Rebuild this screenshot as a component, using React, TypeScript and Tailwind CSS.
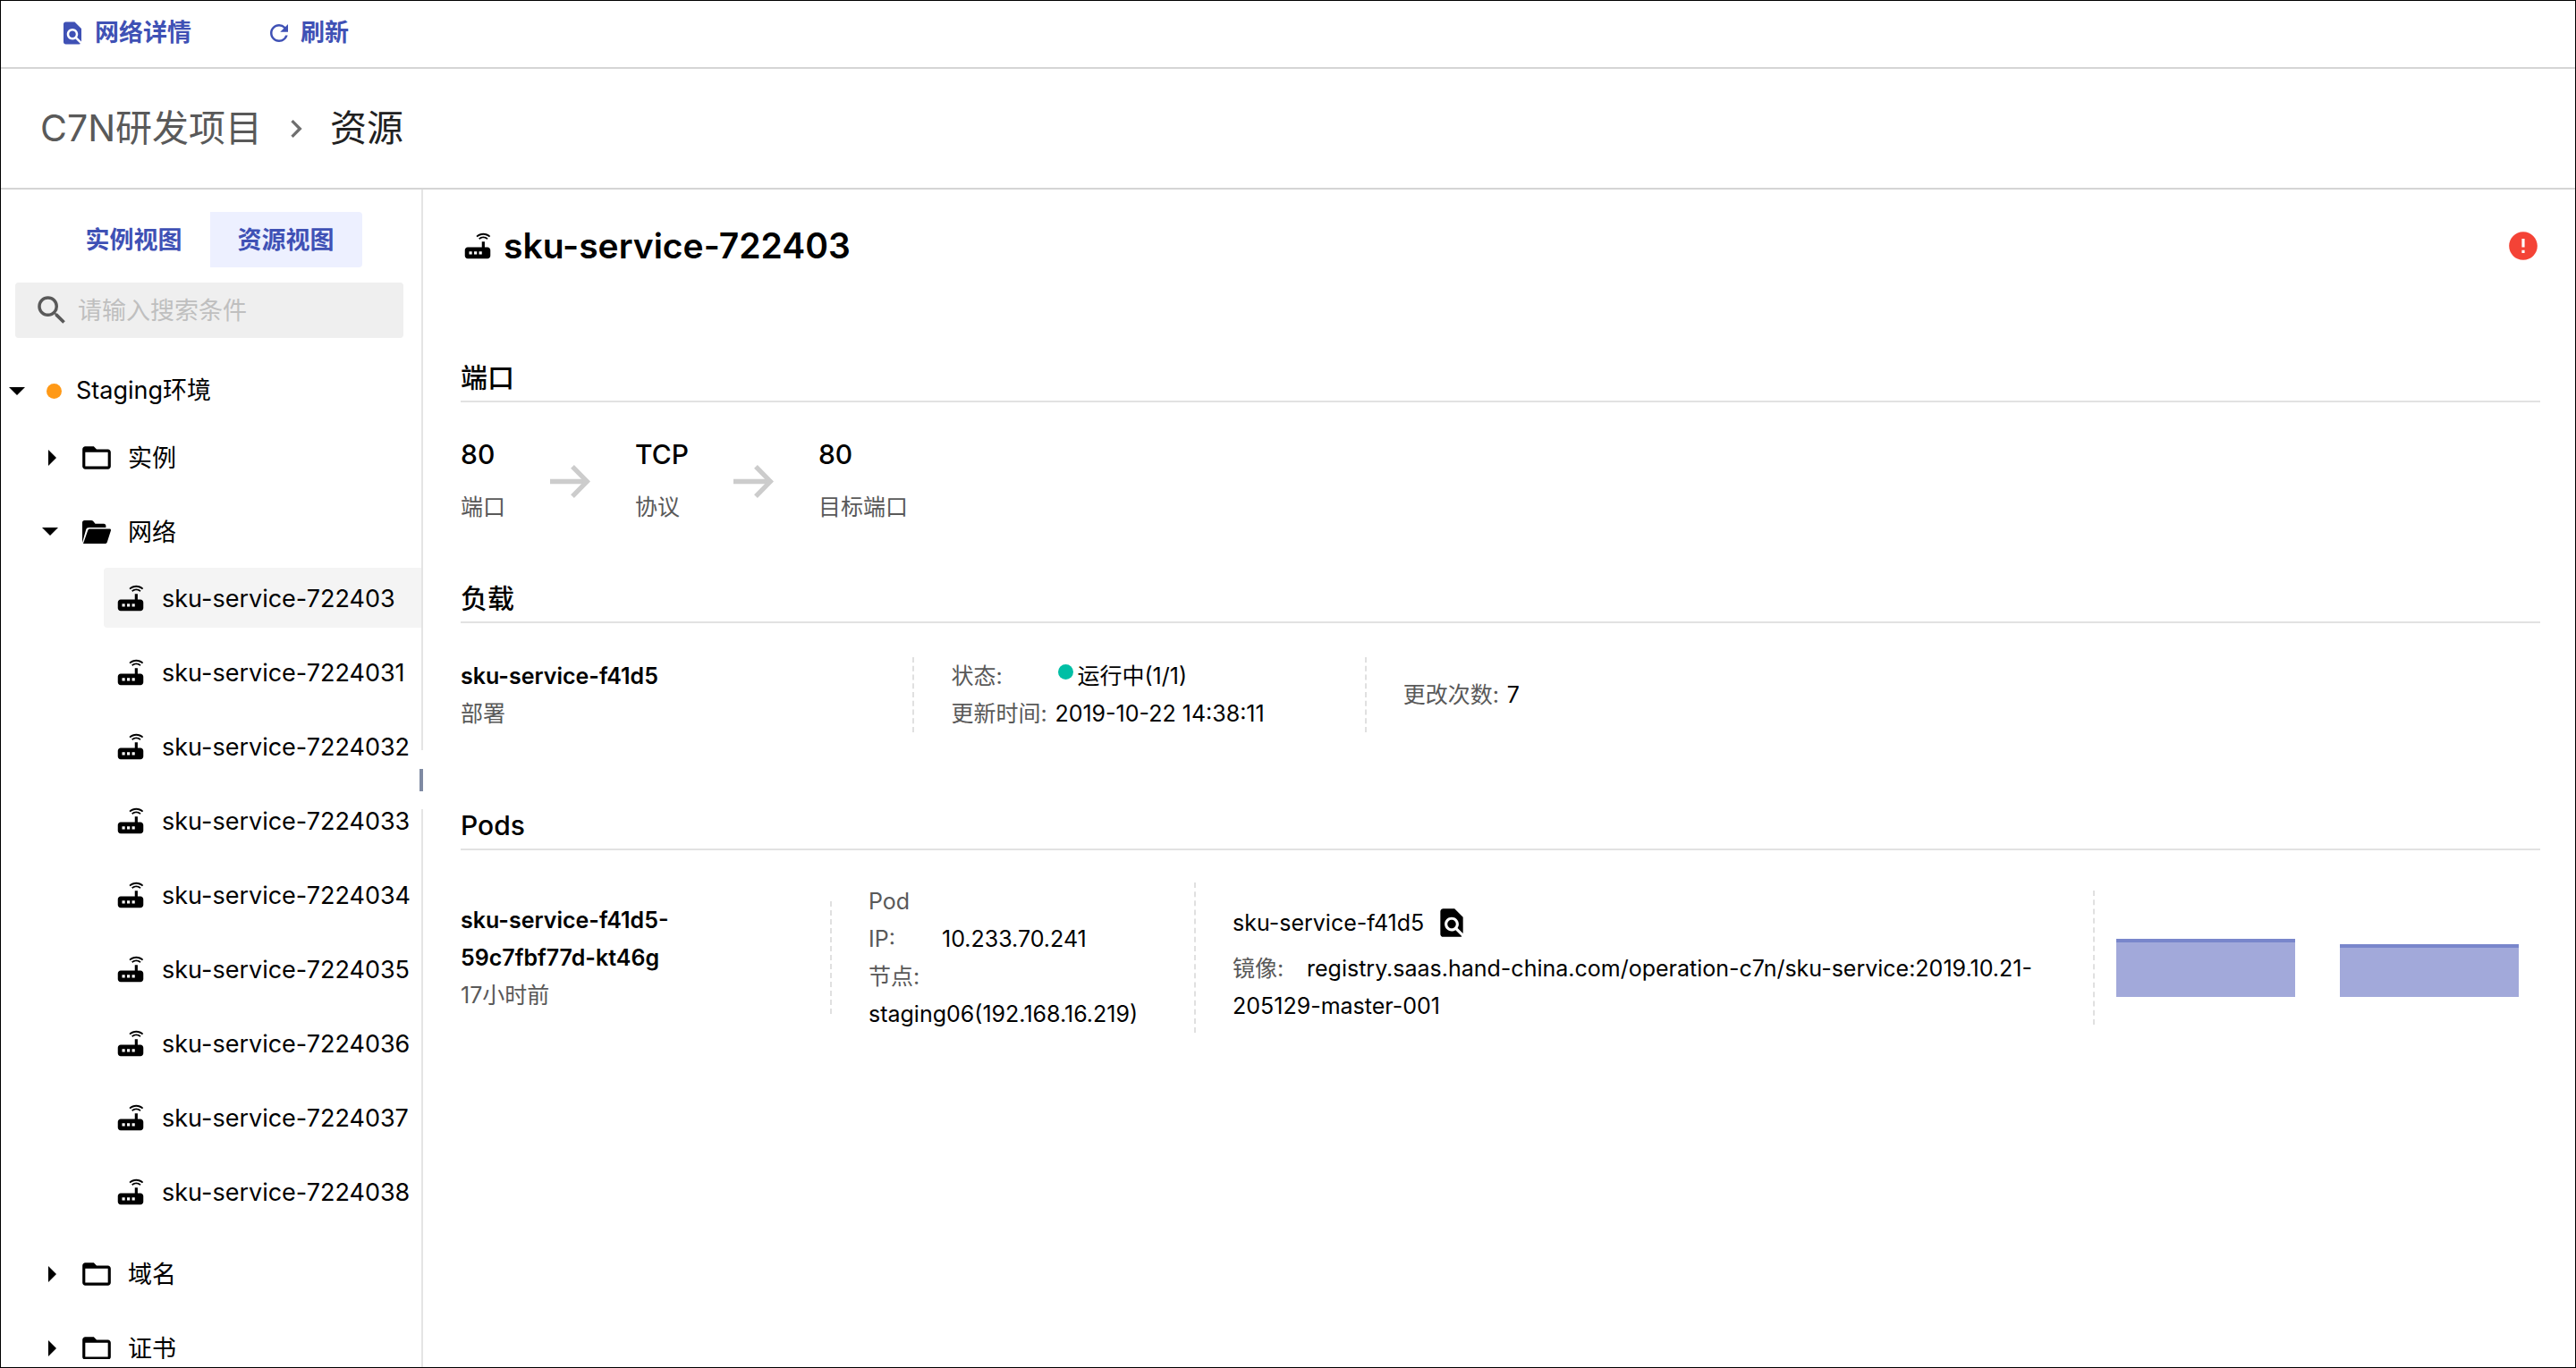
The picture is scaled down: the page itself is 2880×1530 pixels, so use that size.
import type { ReactNode } from 'react';
import {
  MdChevronRight,
  MdError,
  MdFindInPage,
  MdFolderOpen,
  MdRefresh,
  MdRouter,
  MdSearch,
} from 'react-icons/md';

const services = [
  'sku-service-722403',
  'sku-service-7224031',
  'sku-service-7224032',
  'sku-service-7224033',
  'sku-service-7224034',
  'sku-service-7224035',
  'sku-service-7224036',
  'sku-service-7224037',
  'sku-service-7224038',
];

function CaretDown() {
  return (
    <svg className="h-[9px] w-[18px] shrink-0" viewBox="0 0 18 9" aria-hidden="true">
      <path d="M0 0h18L9 9z" />
    </svg>
  );
}

function CaretRight() {
  return (
    <svg className="h-[18px] w-[9px] shrink-0" viewBox="0 0 9 18" aria-hidden="true">
      <path d="M0 0v18l9-9z" />
    </svg>
  );
}

function OpenFolder() {
  return (
    <svg className="h-[26px] w-8 shrink-0" viewBox="0 0 32 26" aria-hidden="true">
      <path d="M0 25V2.500C0 1 1 0 2.500 0h7.500c1 0 1.700.3 2.300 1l2.200 2.800h9.500c1.500 0 2.400 1 2.400 2.400V8H7.500C5.800 8 4.800 8.700 4.200 10.300z" />
      <path d="M1 26 6.200 11.300C6.600 10 7.300 9.400 8.600 9.400h21.900c1.200 0 1.800.9 1.400 2.100l-4 12.400c-.4 1.400-1.200 2.100-2.600 2.100z" />
    </svg>
  );
}

function FlowArrow() {
  return (
    <svg className="h-[37px] w-[45px] shrink-0" viewBox="0 0 45 37" fill="none" stroke="#cccccc" strokeWidth="5.300" aria-hidden="true">
      <path d="M0 18.500h41" />
      <path d="M25 1.900 41.300 18.500 25 35.100" />
    </svg>
  );
}

function Folder({ name, open = false }: { name: string; open?: boolean }) {
  return (
    <button type="button" aria-expanded={open} className="flex h-[67px] w-full items-center pl-[46px] text-left">
      <span className={open ? 'flex w-[18px]' : 'flex w-[18px] pl-[7px]'}>{open ? <CaretDown /> : <CaretRight />}</span>
      <span className="ml-6 flex w-[38px] justify-center">
        {open ? <OpenFolder /> : <MdFolderOpen size={38} />}
      </span>
      <span className="ml-4 pt-[3px]">{name}</span>
    </button>
  );
}

function Section({ title, className, children }: { title: string; className: string; children: ReactNode }) {
  return (
    <section className={className}>
      <h2 className="border-b-2 border-[#e2e2e2] pb-1.5 text-[30px] leading-10 font-medium">{title}</h2>
      {children}
    </section>
  );
}

function PortItem({ value, label }: { value: string; label: string }) {
  return (
    <div className="flex flex-col gap-[18px]">
      <span className="text-[30px] leading-10 font-medium">{value}</span>
      <span className="text-[25px] leading-[42px] text-[#595959]">{label}</span>
    </div>
  );
}

export default function App() {
  return (
    <div
      className="flex h-screen flex-col border border-black bg-white text-[27px] text-black"
      style={{ fontFamily: 'Inter, "Noto Sans CJK SC", sans-serif' }}
    >
      <header>
        <div className="flex h-[76px] items-center border-b-2 border-[#d5d5d5] pb-0.5 pl-[65px] font-semibold text-[#3f51b5]">
          <button type="button" className="flex items-center gap-2.5">
            <MdFindInPage size={30} />
            网络详情
          </button>
          <button type="button" className="ml-[83px] flex items-center gap-[9px]">
            <MdRefresh size={30} />
            刷新
          </button>
        </div>
        <nav aria-label="breadcrumb" className="flex h-[135px] items-center border-b-2 border-[#d5d5d5] pl-11 text-[41px]">
          <a href="#project" className="text-[#595959]">C7N研发项目</a>
          <MdChevronRight size={40} className="mx-[18px] text-[#6f6f6f]" />
          <span className="text-[#212121]">资源</span>
        </nav>
      </header>

      <div className="flex min-h-0 flex-1">
        <aside className="relative flex w-[472px] shrink-0 flex-col border-r-2 border-[#e4e4e4] pt-[25px] pb-[9px]">
          <div className="flex shrink-0 justify-center pr-[3px] font-semibold text-[#3f51b5]">
            <button type="button" className="h-[62px] px-[31px] pt-[3px]">实例视图</button>
            <button type="button" className="h-[62px] rounded-r bg-[#edf0ff] px-[31px] pt-[3px]">资源视图</button>
          </div>
          <label className="mt-[17px] mr-5 ml-4 flex h-[62px] shrink-0 items-center rounded bg-[#efefef] pl-5 text-[#595959]">
            <MdSearch size={42} className="shrink-0" />
            <input
              type="text"
              aria-label="搜索"
              placeholder="请输入搜索条件"
              className="ml-2 min-w-0 flex-1 bg-transparent pt-0.5 outline-none placeholder:text-[#bfbfbf]"
            />
          </label>

          <div className="mt-[26px] min-h-0 flex-1 overflow-hidden">
            <button type="button" aria-expanded="true" className="flex h-[67px] w-full items-center pl-[9px] text-left">
              <CaretDown />
              <span className="ml-6 size-[17px] rounded-full bg-[#ff9916]" />
              <span className="ml-4">Staging环境</span>
            </button>
            <ul className="mt-[7px] flex flex-col gap-4">
              <li><Folder name="实例" /></li>
              <li>
                <Folder name="网络" open />
                <ul className="mt-[7px] mb-[9px] flex flex-col gap-4 pl-[115px]">
                  {services.map((name, i) => (
                    <li key={name}>
                      <button
                        type="button"
                        className={
                          i === 0
                            ? 'flex h-[67px] w-full items-center rounded-l bg-[#f4f4f4] pl-[11px] whitespace-nowrap'
                            : 'flex h-[67px] w-full items-center pl-[11px] whitespace-nowrap'
                        }
                      >
                        <MdRouter size={38} className="shrink-0" />
                        <span className="ml-4 pt-[3px]">{name}</span>
                      </button>
                    </li>
                  ))}
                </ul>
              </li>
              <li><Folder name="域名" /></li>
              <li><Folder name="证书" /></li>
            </ul>
          </div>

          <div className="absolute top-[627px] -right-0.5 flex h-[66px] w-1 items-center bg-white">
            <span className="h-[25px] w-full bg-[#7f8aa3]" />
          </div>
        </aside>

        <main className="min-w-0 flex-1 pt-[31px] pr-[39px] pl-[42px]">
          <div className="flex h-16 items-center justify-between">
            <h1 className="flex items-center text-[39px] font-semibold">
              <MdRouter size={38} />
              <span className="ml-2.5">sku-service-722403</span>
            </h1>
            <MdError size={38} className="text-[#f44336]" role="img" aria-label="错误" />
          </div>

          <Section title="端口" className="mt-[95px]">
            <div className="mt-[38px] flex items-center gap-[50px]">
              <PortItem value="80" label="端口" />
              <FlowArrow />
              <PortItem value="TCP" label="协议" />
              <FlowArrow />
              <PortItem value="80" label="目标端口" />
            </div>
          </Section>

          <Section title="负载" className="mt-[61px]">
            <div className="mt-[38px] grid grid-cols-[5fr_5fr_13fr] text-[25px] leading-[42px]">
              <div>
                <div className="font-semibold">sku-service-f41d5</div>
                <div className="text-[#595959]">部署</div>
              </div>
              <div className="border-l-2 border-dashed border-[#e0e0e0] pl-[41px]">
                <div className="flex">
                  <span className="w-[116px] text-[#595959]">状态:</span>
                  <span className="mt-2 mr-1 ml-1 size-[17px] rounded-full bg-[#00bfa5]" />
                  <span>运行中(1/1)</span>
                </div>
                <div className="flex">
                  <span className="w-[116px] text-[#595959]">更新时间:</span>
                  <span>2019-10-22 14:38:11</span>
                </div>
              </div>
              <div className="flex items-center border-l-2 border-dashed border-[#e0e0e0] pl-[41px]">
                <span className="w-[116px] text-[#595959]">更改次数:</span>
                <span>7</span>
              </div>
            </div>
          </Section>

          <Section title="Pods" className="mt-[84px]">
            <div className="mt-9 grid grid-cols-[413fr_407fr_1005fr_500fr] items-center text-[25px] leading-[42px]">
              <div className="pr-[100px]">
                <div className="font-semibold">sku-service-f41d5-59c7fbf77d-kt46g</div>
                <div className="text-[#595959]">17小时前</div>
              </div>
              <div className="flex h-[126px] items-center border-l-2 border-dashed border-[#e0e0e0] pl-[41px]">
                <div>
                  <div>
                    <span className="inline-block w-[82px] text-[#595959]">Pod IP:</span>
                    <span>10.233.70.241</span>
                  </div>
                  <div>
                    <span className="inline-block w-[82px] text-[#595959]">节点:</span>
                    <span>staging06(192.168.16.219)</span>
                  </div>
                </div>
              </div>
              <div className="flex h-[168px] flex-col justify-center border-l-2 border-dashed border-[#e0e0e0] pt-1.5 pr-12 pl-[41px]">
                <div className="flex h-[60px] items-center">
                  <span>sku-service-f41d5</span>
                  <button type="button" aria-label="查看日志" className="ml-3">
                    <MdFindInPage size={38} />
                  </button>
                </div>
                <div>
                  <span className="inline-block w-[83px] text-[#595959]">镜像:</span>
                  <span>registry.saas.hand-china.com/operation-c7n/sku-service:2019.10.21-205129-master-001</span>
                </div>
              </div>
              <div className="flex h-[150px] items-end gap-[50px] border-l-2 border-dashed border-[#e0e0e0] px-6 pb-[31px]">
                <div className="h-[65px] flex-1 border-t-4 border-[#7986cb] bg-[#a2a9da]" />
                <div className="h-[59px] flex-1 border-t-4 border-[#7986cb] bg-[#a2a9da]" />
              </div>
            </div>
          </Section>
        </main>
      </div>
    </div>
  );
}
